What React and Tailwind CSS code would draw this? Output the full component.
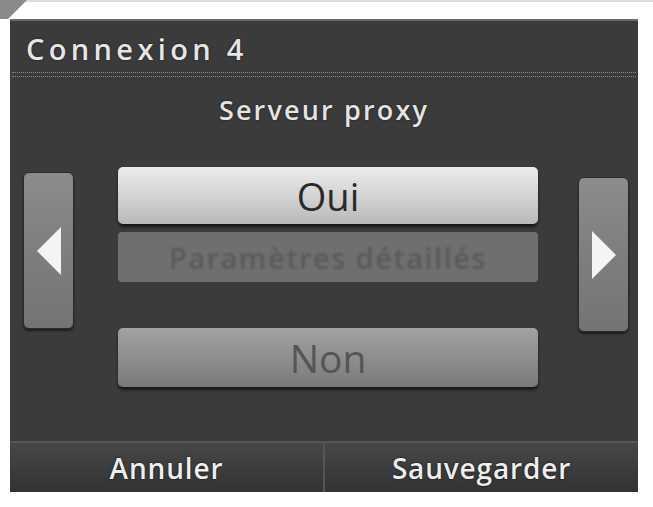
import React from "react";

const font = { fontFamily: "'Open Sans', 'DejaVu Sans', sans-serif" };

const ArrowButton = ({ dir, className }) => (
  <div
    className={`w-[51px] rounded-[6px] border border-[#2a2a2a] bg-gradient-to-b from-[#8c8c8c] via-[#7e7e7e] to-[#747474] shadow-[0_2px_2px_rgba(0,0,0,0.5)] flex items-center justify-center ${className}`}
  >
    <svg width="28" height="52" viewBox="0 0 28 52">
      {dir === "left" ? (
        <polygon points="26,2 26,50 2,26" fill="#f4f4f4" />
      ) : (
        <polygon points="2,2 2,50 26,26" fill="#f4f4f4" />
      )}
    </svg>
  </div>
);

export default function App() {
  return (
    <div className="w-[653px] h-[507px] bg-white relative overflow-hidden" style={font}>
      <div className="h-[2px] bg-[#dcdcdc]" />
      {/* corner flap */}
      <svg className="absolute left-0 top-0" width="28" height="20" viewBox="0 0 28 20">
        <polygon points="0,0 27,0 8,19 0,19" fill="#8a8a8a" />
      </svg>
      <div className="pl-[10px] pt-[17px]">
        <div className="w-[628px] h-[473px] bg-[#3b3b3b] border-t-2 border-[#6a6a6a] flex flex-col">
          {/* header */}
          <div className="h-[51px] flex items-center pl-[16px] pt-[4px]">
            <span className="text-[29px] font-semibold tracking-[0.15em] text-[#e6e6e6] leading-none [text-shadow:0_0_2px_#111]">
              Connexion 4
            </span>
          </div>
          <div className="h-[5px] border-y border-dotted border-[#8a8a8a] mx-[2px]" />
          {/* subtitle */}
          <div className="h-[60px] flex items-center justify-center">
            <span className="text-[27px] font-semibold tracking-[0.08em] text-[#e4e4e4] leading-none [text-shadow:0_0_2px_#111] translate-y-[2px]">
              Serveur proxy
            </span>
          </div>
          {/* middle */}
          <div className="flex mt-[30px]">
            <ArrowButton dir="left" className="ml-[13px] mt-[5px] h-[157px]" />
            <div className="ml-[44px] w-[420px] flex flex-col">
              <div className="h-[57px] rounded-[5px] bg-gradient-to-b from-[#ececec] via-[#d4d4d4] to-[#b9b9b9] shadow-[0_3px_3px_rgba(0,0,0,0.6)] flex items-center justify-center">
                <span className="text-[38px] text-[#2a2a2a] leading-none">Oui</span>
              </div>
              <div className="mt-[8px] h-[50px] rounded-[4px] bg-[#6f6f6f] flex items-center justify-center">
                <span className="text-[29px] font-semibold tracking-[0.05em] text-[#5a5a5a] leading-none blur-[0.8px]">
                  Paramètres détaillés
                </span>
              </div>
              <div className="mt-[46px] h-[59px] rounded-[5px] bg-gradient-to-b from-[#a2a2a2] via-[#8e8e8e] to-[#7a7a7a] shadow-[0_3px_3px_rgba(0,0,0,0.6)] flex items-center justify-center">
                <span className="text-[39px] text-[#555555] leading-none">Non</span>
              </div>
            </div>
            <ArrowButton dir="right" className="ml-[40px] mt-[10px] h-[155px]" />
          </div>
          {/* bottom bar */}
          <div className="mt-auto h-[51px] flex border-t-2 border-[#565656] bg-gradient-to-b from-[#474747] to-[#333333]">
            <div className="flex-1 flex items-center justify-center border-r-2 border-[#555555]">
              <span className="text-[28px] font-semibold tracking-[0.03em] text-[#eeeeee] leading-none [text-shadow:0_0_2px_#000]">
                Annuler
              </span>
            </div>
            <div className="flex-1 flex items-center justify-center">
              <span className="text-[28px] font-semibold tracking-[0.03em] text-[#eeeeee] leading-none [text-shadow:0_0_2px_#000]">
                Sauvegarder
              </span>
            </div>
          </div>
        </div>
      </div>
    </div>
  );
}
